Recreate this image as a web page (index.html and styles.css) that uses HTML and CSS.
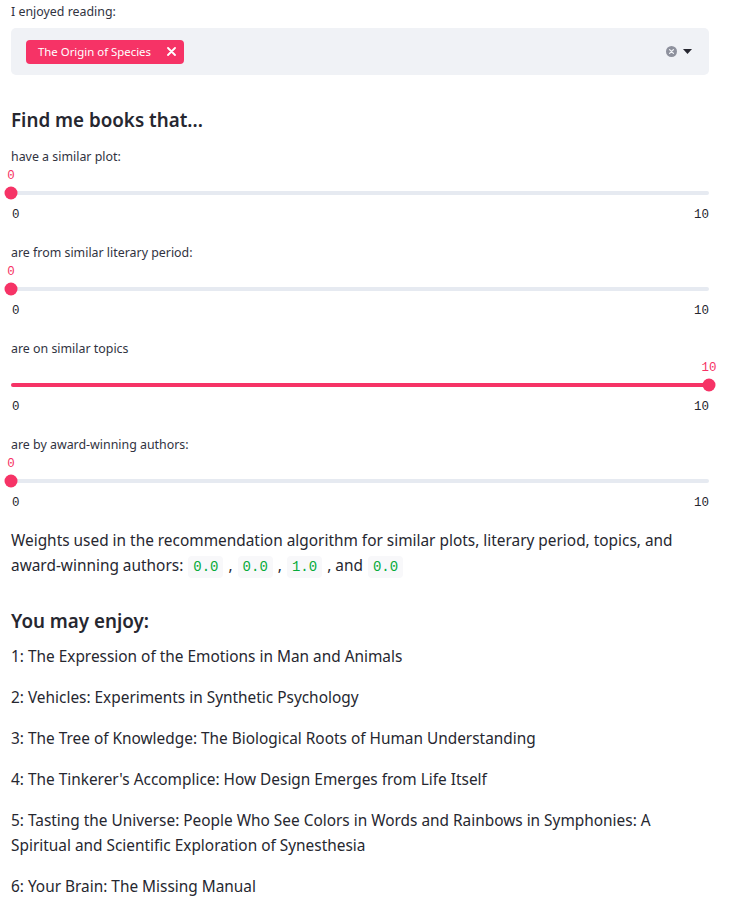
FILE: index.html
```html
<!DOCTYPE html>
<html>
<head>
<meta charset="utf-8">
<link rel="stylesheet" href="styles.css">
</head>
<body>
<div class="main">
  <div class="label top-label">I enjoyed reading:</div>
  <div class="select">
    <span class="tag">The Origin of Species
      <svg class="tag-x" width="9" height="9" viewBox="0 0 9 9"><path d="M1 1L8 8M8 1L1 8" stroke="#fff" stroke-width="1.8" stroke-linecap="round"/></svg>
    </span>
    <span class="select-icons">
      <svg width="11" height="11" viewBox="0 0 11 11"><circle cx="5.5" cy="5.5" r="5.5" fill="#8e919d"/><path d="M3.6 3.6L7.4 7.4M7.4 3.6L3.6 7.4" stroke="#f0f2f6" stroke-width="1.3" stroke-linecap="round"/></svg>
      <svg width="9" height="5" viewBox="0 0 9 5"><path d="M0 0H9L4.5 5Z" fill="#262730"/></svg>
    </span>
  </div>

  <h3 class="heading first">Find me books that...</h3>

  <div class="slider">
    <div class="label">have a similar plot:</div>
    <div class="value-row"><span class="value" style="left:0%">0</span></div>
    <div class="track-row">
      <div class="track"><div class="fill" style="width:0%"></div><div class="thumb" style="left:0%"></div></div>
    </div>
    <div class="minmax"><span>0</span><span>10</span></div>
  </div>

  <div class="slider">
    <div class="label">are from similar literary period:</div>
    <div class="value-row"><span class="value" style="left:0%">0</span></div>
    <div class="track-row">
      <div class="track"><div class="fill" style="width:0%"></div><div class="thumb" style="left:0%"></div></div>
    </div>
    <div class="minmax"><span>0</span><span>10</span></div>
  </div>

  <div class="slider">
    <div class="label">are on similar topics</div>
    <div class="value-row"><span class="value" style="left:100%">10</span></div>
    <div class="track-row">
      <div class="track"><div class="fill" style="width:100%"></div><div class="thumb" style="left:100%"></div></div>
    </div>
    <div class="minmax"><span>0</span><span>10</span></div>
  </div>

  <div class="slider last">
    <div class="label">are by award-winning authors:</div>
    <div class="value-row"><span class="value" style="left:0%">0</span></div>
    <div class="track-row">
      <div class="track"><div class="fill" style="width:0%"></div><div class="thumb" style="left:0%"></div></div>
    </div>
    <div class="minmax"><span>0</span><span>10</span></div>
  </div>

  <p class="weights">Weights used in the recommendation algorithm for similar plots, literary period, topics, and award-winning authors:<code>0.0</code>,<code>0.0</code>,<code>1.0</code>, and<code>0.0</code></p>

  <h3 class="heading second">You may enjoy:</h3>

  <p class="item">1: The Expression of the Emotions in Man and Animals</p>
  <p class="item">2: Vehicles: Experiments in Synthetic Psychology</p>
  <p class="item">3: The Tree of Knowledge: The Biological Roots of Human Understanding</p>
  <p class="item">4: The Tinkerer's Accomplice: How Design Emerges from Life Itself</p>
  <p class="item">5: Tasting the Universe: People Who See Colors in Words and Rainbows in Symphonies: A Spiritual and Scientific Exploration of Synesthesia</p>
  <p class="item">6: Your Brain: The Missing Manual</p>
</div>
</body>
</html>
```

FILE: styles.css
```css
html, body {
  margin: 0;
  padding: 0;
  background: #ffffff;
}
body {
  font-family: "Noto Sans", "Open Sans", sans-serif;
  color: #262730;
}
.main {
  width: 698px;
  padding: 2px 0 0 11px;
}
.label {
  font-size: 12.4px;
  line-height: 20px;
  color: #31333f;
}
.slider .label {
  padding-top: 1px;
  height: 19px;
}
.select {
  margin-top: 6px;
  height: 47px;
  background: #f0f2f6;
  border-radius: 5px;
  display: flex;
  align-items: center;
  padding: 0 17px 0 15px;
}
.tag {
  display: inline-flex;
  align-items: center;
  height: 24px;
  background: #f63366;
  color: #ffffff;
  border-radius: 4px;
  font-size: 11.4px;
  padding: 0 8px 0 12px;
  gap: 16px;
}
.tag-x {
  display: block;
}
.select-icons {
  margin-left: auto;
  display: flex;
  align-items: center;
  gap: 6px;
}
.select-icons svg {
  display: block;
}
.heading {
  margin: 0;
  font-size: 18.8px;
  font-weight: 600;
  line-height: 30px;
  color: #262730;
}
.heading.first {
  margin-top: 30px;
  margin-bottom: 11px;
}
.slider {
  height: 76px;
  margin-bottom: 20px;
}
.slider.last {
  margin-bottom: 18px;
}
.value-row {
  position: relative;
  height: 16px;
}
.value {
  position: absolute;
  top: 2px;
  transform: translateX(-50%);
  font-family: "Liberation Mono", "DejaVu Sans Mono", monospace;
  font-size: 12.5px;
  line-height: 16px;
  color: #f63366;
}
.track-row {
  height: 22px;
  display: flex;
  align-items: center;
}
.track {
  position: relative;
  width: 100%;
  height: 4px;
  background: #e6eaf1;
  border-radius: 2px;
}
.fill {
  height: 4px;
  background: #f63366;
  border-radius: 2px;
}
.thumb {
  position: absolute;
  top: 50%;
  width: 13px;
  height: 13px;
  border-radius: 50%;
  background: #f63366;
  transform: translate(-50%, -50%);
}
.minmax {
  height: 14px;
  padding-top: 4px;
  display: flex;
  justify-content: space-between;
  align-items: center;
  font-family: "Liberation Mono", "DejaVu Sans Mono", monospace;
  font-size: 12.5px;
  color: #262730;
  padding-left: 1px;
}
.weights {
  margin: 0;
  font-size: 15.4px;
  line-height: 25px;
}
code {
  font-family: "Liberation Mono", "DejaVu Sans Mono", monospace;
  font-size: 14px;
  color: #09ab3b;
  background: #f8f8fa;
  padding: 3px 5px;
  margin: 0 5px;
  border-radius: 4px;
}
.heading.second {
  margin-top: 26px;
  margin-bottom: 8px;
}
.item {
  margin: 0 0 16px;
  font-size: 15.4px;
  line-height: 25px;
}
```
